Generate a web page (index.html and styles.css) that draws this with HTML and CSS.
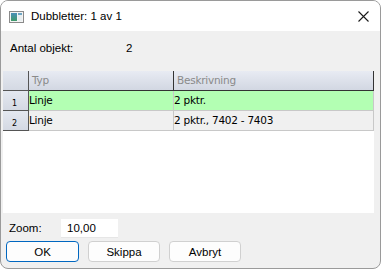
FILE: index.html
```html
<!DOCTYPE html>
<html lang="sv">
<head>
  <meta charset="UTF-8">
  <title>Dubbletter</title>
  <link rel="stylesheet" href="styles.css">
</head>
<body>
  <div class="window">
    <div class="titlebar">
      <svg class="app-icon" width="15" height="12" viewBox="0 0 15 12">
        <defs>
          <linearGradient id="ig" x1="0" y1="0" x2="0" y2="1">
            <stop offset="0" stop-color="#4a8fb8"/>
            <stop offset="1" stop-color="#3f9a6a"/>
          </linearGradient>
        </defs>
        <rect x="0.5" y="0.5" width="14" height="11" fill="#f4f4f4" stroke="#8a8a8a"/>
        <rect x="2" y="2" width="6" height="8" fill="url(#ig)"/>
        <rect x="9" y="2" width="4" height="8" fill="#e8eef0"/>
        <rect x="9" y="2" width="4" height="2" fill="#6fa6c4"/>
      </svg>
      <span class="title">Dubbletter: 1 av 1</span>
      <svg class="close" width="11" height="11" viewBox="0 0 11 11">
        <path d="M0.5 0.5 L10.5 10.5 M10.5 0.5 L0.5 10.5" stroke="#1a1a1a" stroke-width="1.1"/>
      </svg>
    </div>

    <div class="content">
      <div class="info">
        <span class="info-label">Antal objekt:</span>
        <span>2</span>
      </div>

      <div class="grid">
        <div class="row head">
          <div class="rh"></div>
          <div class="cell c1">Typ</div>
          <div class="cell c2">Beskrivning</div>
        </div>
        <div class="row sel">
          <div class="rh">1</div>
          <div class="cell c1">Linje</div>
          <div class="cell c2">2 pktr.</div>
        </div>
        <div class="row">
          <div class="rh">2</div>
          <div class="cell c1">Linje</div>
          <div class="cell c2">2 pktr., 7402 - 7403</div>
        </div>
      </div>

      <div class="zoom">
        <span class="zoom-label">Zoom:</span>
        <div class="input">10,00</div>
      </div>

      <div class="buttons">
        <button class="btn default">OK</button>
        <button class="btn">Skippa</button>
        <button class="btn">Avbryt</button>
      </div>
    </div>
  </div>
</body>
</html>
```

FILE: styles.css
```css
body {margin: 0; background: #fff; font: 11.5px/14px "Liberation Sans", Arial, sans-serif; color: #000;}
.window {box-sizing: border-box; width: 381px; height: 269px; border: 1px solid #9a9a9a; border-radius: 8px; overflow: hidden; display: flex; flex-direction: column; background: #f0f0f0;}

.titlebar {height: 30px; flex: none; background: #fff; display: flex; align-items: center; padding: 0 10px 0 8px;}
.app-icon {margin-right: 7px; margin-top: 1px;}
.title {flex: 1; font-size: 11.5px;}
.close {margin-right: 1px;}

.content {flex: 1; display: flex; flex-direction: column;}
.info {height: 40px; display: flex; align-items: center; padding: 0 0 6px 9px; box-sizing: border-box;}
.info-label {width: 116px;}

.grid {margin-left: 2px; width: 371px; height: 142px; background: #fff; font: 10.5px/14px "DejaVu Sans", Tahoma, sans-serif; letter-spacing: -0.25px;}
.row {display: flex; height: 20px;}
.cell {box-sizing: border-box; padding: 2px 0 0 0; white-space: nowrap; overflow: hidden; background: #f0f0f0; border-right: 1px solid #c8c8c8; border-bottom: 1px solid #c8c8c8;}
.c1 {width: 145px;}
.c2 {width: 200px;}
.sel .cell {background: #b3ffb3;}
.rh {box-sizing: border-box; width: 26px; border-right: 1px solid #555; border-bottom: 1px solid #555; background: linear-gradient(#e4e8f0, #d4d9e3); font-size: 8px; line-height: 8px; text-align: center; padding-top: 9px; padding-right: 2px;}
.head .cell {background: linear-gradient(#e8ebf3, #d2d7e2); color: #8a8a8a; border-right: 1px solid #333; border-bottom: 1px solid #333; padding-left: 3px;}
.head .rh {padding: 0;}

.zoom {display: flex; align-items: center; height: 24px; margin-top: 3px; padding-left: 8px;}
.zoom-label {width: 52px;}
.input {width: 51px; height: 18px; background: #fff; padding-left: 6px; line-height: 18px; border-bottom: 1px solid #e6e6e6;}

.buttons {display: flex; gap: 9px; padding: 1px 0 0 5px;}
.btn {box-sizing: border-box; width: 72px; height: 21px; margin: 0; padding: 0; background: #fdfdfd; border: 1px solid #d0d0d0; border-radius: 4px; font: 11.5px "Liberation Sans", Arial, sans-serif; color: #000;}
.btn.default {border: 1px solid #0067c0; width: 73px;}
```
